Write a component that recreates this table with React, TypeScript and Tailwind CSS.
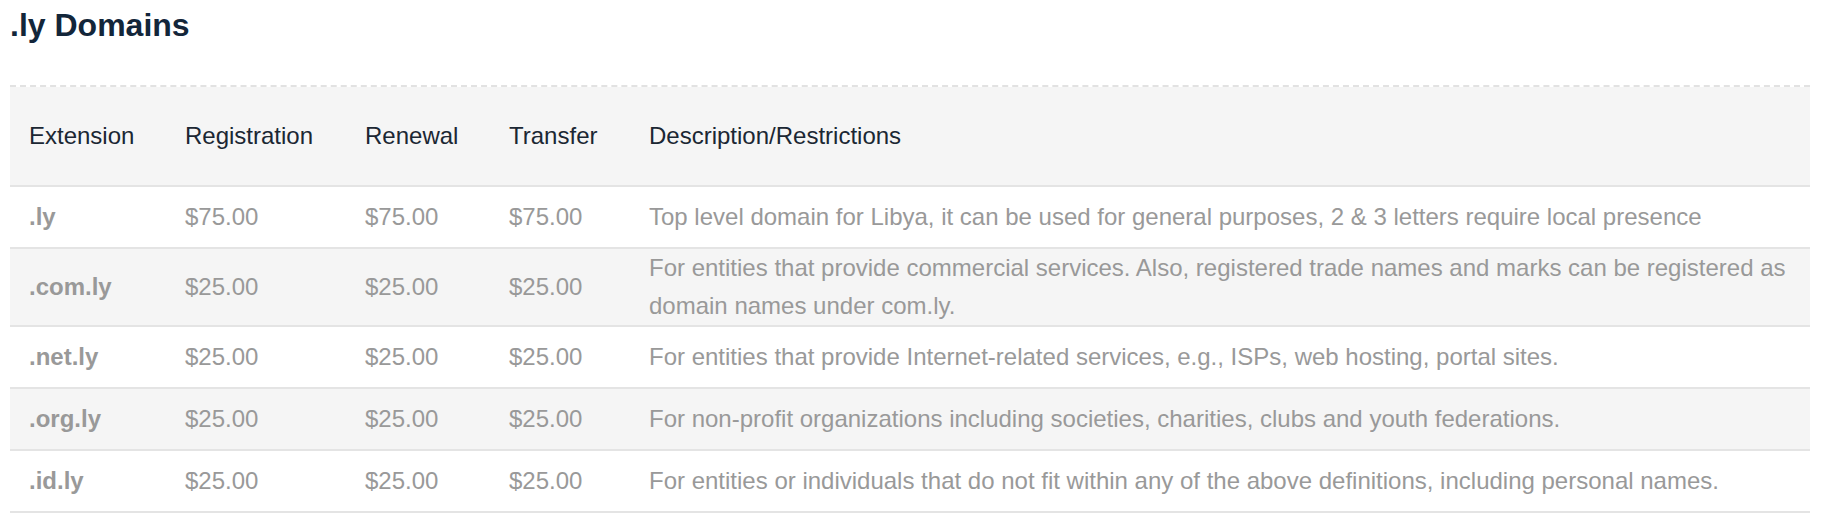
type Domain = {
  ext: string
  registration: string
  renewal: string
  transfer: string
  description: string
}

const domains: Domain[] = [
  {
    ext: ".ly",
    registration: "$75.00",
    renewal: "$75.00",
    transfer: "$75.00",
    description:
      "Top level domain for Libya, it can be used for general purposes, 2 & 3 letters require local presence",
  },
  {
    ext: ".com.ly",
    registration: "$25.00",
    renewal: "$25.00",
    transfer: "$25.00",
    description:
      "For entities that provide commercial services. Also, registered trade names and marks can be registered as domain names under com.ly.",
  },
  {
    ext: ".net.ly",
    registration: "$25.00",
    renewal: "$25.00",
    transfer: "$25.00",
    description:
      "For entities that provide Internet-related services, e.g., ISPs, web hosting, portal sites.",
  },
  {
    ext: ".org.ly",
    registration: "$25.00",
    renewal: "$25.00",
    transfer: "$25.00",
    description:
      "For non-profit organizations including societies, charities, clubs and youth federations.",
  },
  {
    ext: ".id.ly",
    registration: "$25.00",
    renewal: "$25.00",
    transfer: "$25.00",
    description:
      "For entities or individuals that do not fit within any of the above definitions, including personal names.",
  },
]

export default function App() {
  return (
    <div className="min-h-screen bg-white font-['Liberation_Sans',Arial,sans-serif] px-[10px] pt-[6px]">
      <h1 className="text-[32px] leading-[38px] font-bold text-[#13263a]">.ly Domains</h1>

      {/* dashed top rule sits on the wrapper so the header's bottom border stays solid */}
      <div className="mt-[41px] w-[1800px] border-t-2 border-dashed border-[#e2e2e2]">
        <table className="w-full border-collapse table-fixed text-[24px] leading-[38px]">
          <colgroup>
            <col className="w-[156px]" />
            <col className="w-[180px]" />
            <col className="w-[144px]" />
            <col className="w-[140px]" />
            <col />
          </colgroup>
          <thead>
            <tr className="bg-[#f5f5f5] border-b-2 border-[#e4e4e4]">
              {["Extension", "Registration", "Renewal", "Transfer", "Description/Restrictions"].map((h) => (
                <th key={h} className="h-[99px] text-left font-normal text-[#1b2733] pl-[19px] pr-2 align-middle">
                  {h}
                </th>
              ))}
            </tr>
          </thead>
          <tbody>
            {domains.map((d, i) => (
              <tr
                key={d.ext}
                className={`border-b-2 border-[#e4e4e4] text-[#999999] ${i % 2 === 1 ? "bg-[#f5f5f5]" : "bg-white"}`}
              >
                <td className="pl-[19px] pr-2 h-[62px] font-bold align-middle">{d.ext}</td>
                <td className="pl-[19px] pr-2 align-middle">{d.registration}</td>
                <td className="pl-[19px] pr-2 align-middle">{d.renewal}</td>
                <td className="pl-[19px] pr-2 align-middle">{d.transfer}</td>
                <td className="pl-[19px] pr-4 align-middle">{d.description}</td>
              </tr>
            ))}
          </tbody>
        </table>
      </div>
    </div>
  )
}
